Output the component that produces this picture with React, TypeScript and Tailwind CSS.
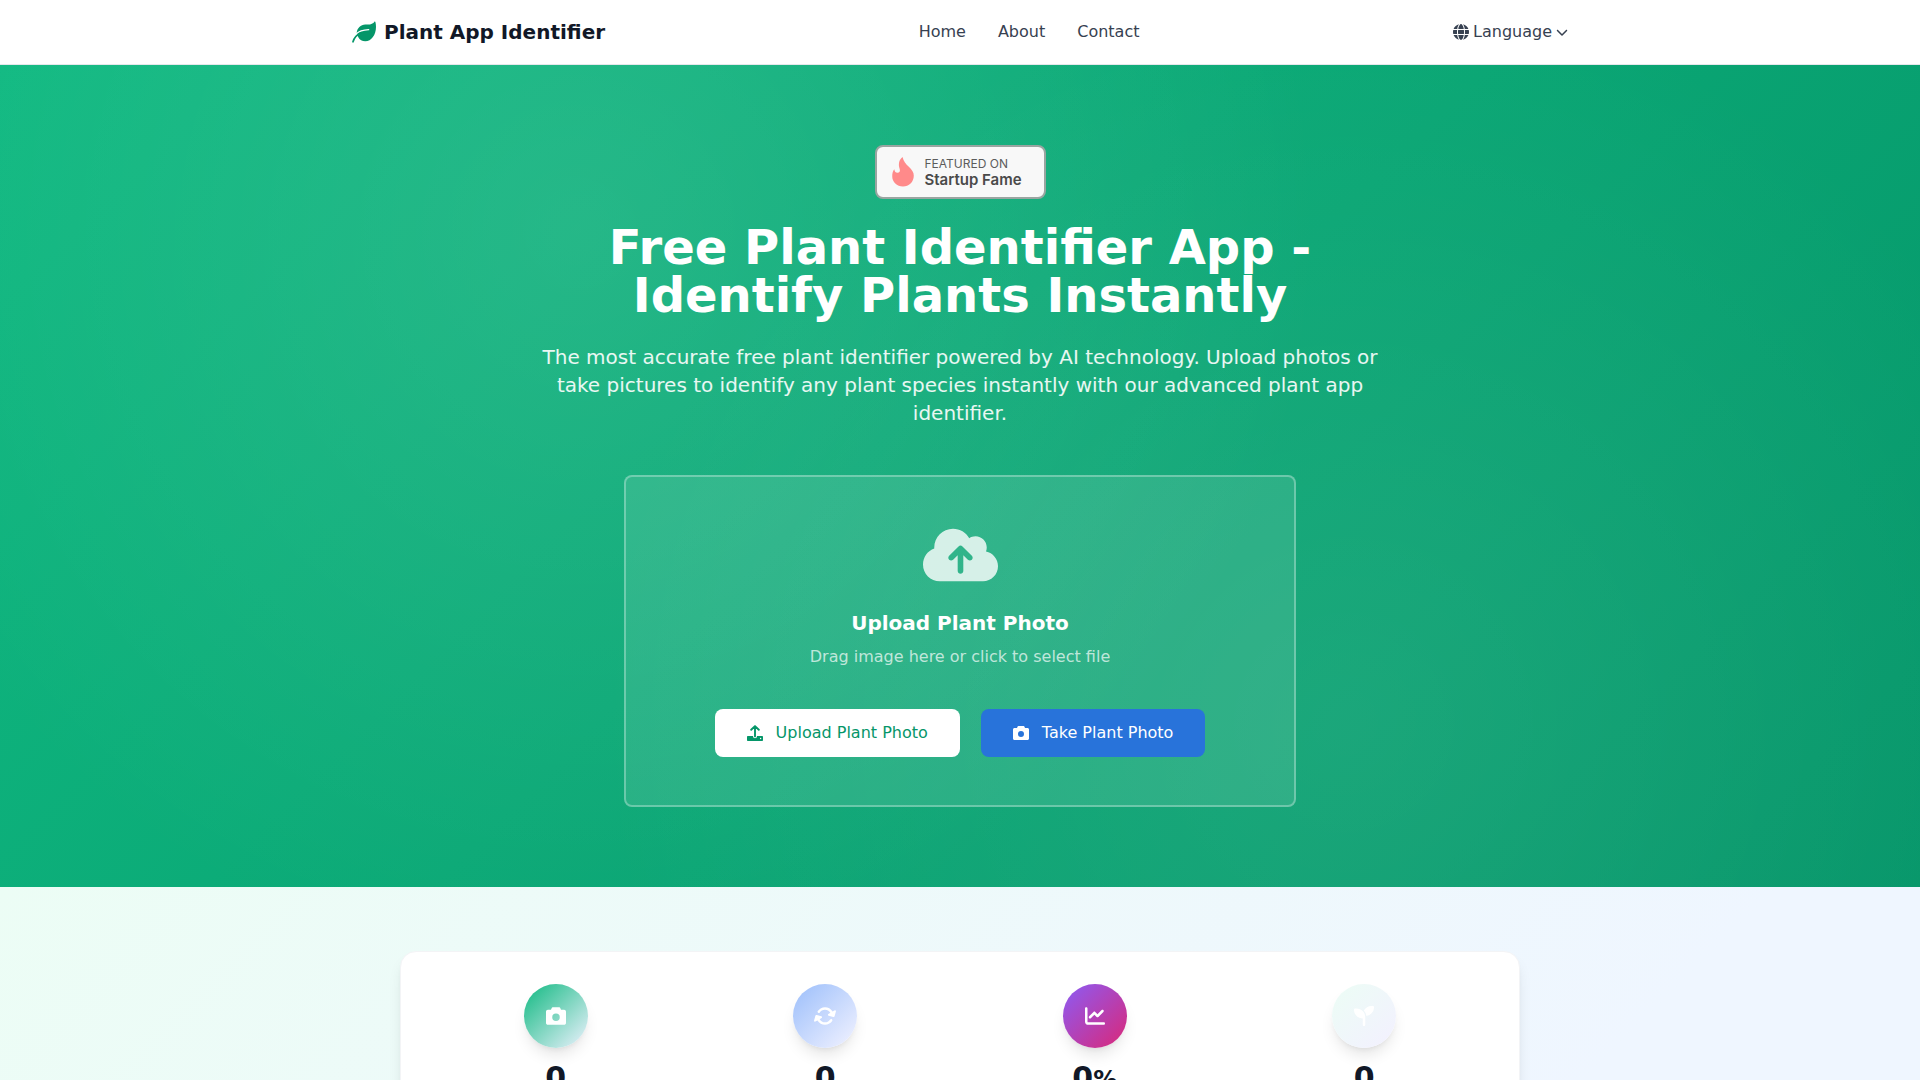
import React, { useRef, useState } from "react";
import {
  FaChartLine,
  FaChevronDown,
  FaCloudArrowUp,
  FaGlobe,
  FaRotate,
  FaSeedling,
} from "react-icons/fa6";

interface IconProps {
  className?: string;
}

const LeafIcon: React.FC<IconProps> = ({ className }) => (
  <svg viewBox="0 0 24 24" className={className} fill="none" aria-hidden="true">
    <path
      fill="currentColor"
      d="M22.6 1.5C23 1.300 23.300 1.500 23.400 1.900C23.800 3.400 24 5 24 6.700C24 14.800 19.400 21.300 13.300 21.300C10.200 21.300 7.600 19.700 6.300 17.200L4.700 13C5.100 8.300 8.700 4.600 13.300 4.600H16C18.900 4.600 21.200 3.700 22.600 1.500Z"
    />
    <path
      stroke="white"
      strokeWidth="1.3"
      strokeLinecap="round"
      d="M4 14.300C7 11.200 11 9.900 16.700 9.700"
    />
    <path
      stroke="currentColor"
      strokeWidth="1.7"
      strokeLinecap="round"
      d="M1 21.800C2 18.200 4.500 15 9 12.800"
    />
  </svg>
);

const CameraIcon: React.FC<IconProps> = ({ className }) => (
  <svg
    viewBox="0 0 16 16"
    className={className}
    fill="currentColor"
    aria-hidden="true"
  >
    <path
      fillRule="evenodd"
      d="M5.400 1H10.600C11 1 11.400 1.300 11.500 1.700L12 3H14.500C15.300 3 16 3.700 16 4.500V13.500C16 14.300 15.300 15 14.500 15H1.500C0.700 15 0 14.300 0 13.500V4.500C0 3.700 0.700 3 1.500 3H4L4.500 1.700C4.600 1.300 5 1 5.400 1ZM8 6A3 3 0 1 0 8 12A3 3 0 1 0 8 6Z"
    />
  </svg>
);

const UploadIcon: React.FC<IconProps> = ({ className }) => (
  <svg
    viewBox="0 0 16 16"
    className={className}
    fill="currentColor"
    aria-hidden="true"
  >
    <path
      fillRule="evenodd"
      d="M1 11H6V11.300A2 2 0 0 0 10 11.300V11H15C15.600 11 16 11.400 16 12V15C16 15.600 15.600 16 15 16H1C0.400 16 0 15.600 0 15V12C0 11.400 0.400 11 1 11ZM13.600 12.800A0.700 0.700 0 1 0 13.600 14.200A0.700 0.700 0 1 0 13.600 12.800Z"
    />
    <path
      fill="none"
      stroke="currentColor"
      strokeWidth="1.900"
      strokeLinecap="round"
      strokeLinejoin="round"
      d="M8 11.400V1.300M4.200 4.800L8 1.100L11.800 4.800"
    />
  </svg>
);

const navLinks = [
  { label: "Home", href: "#home" },
  { label: "About", href: "#about" },
  { label: "Contact", href: "#contact" },
];

const stats = [
  {
    id: "photos",
    value: "0",
    suffix: "",
    icon: <CameraIcon className="h-5 w-5" />,
    circle: "bg-[linear-gradient(135deg,#10b981,#eef2ff)]",
  },
  {
    id: "updates",
    value: "0",
    suffix: "",
    icon: <FaRotate className="rotate-[15deg]" />,
    circle: "bg-[linear-gradient(135deg,#9bbefb,#f3f3ff)]",
  },
  {
    id: "accuracy",
    value: "0",
    suffix: "%",
    icon: <FaChartLine />,
    circle: "bg-[linear-gradient(135deg,#8b5cf6,#db2777)]",
  },
  {
    id: "species",
    value: "0",
    suffix: "",
    icon: <FaSeedling />,
    circle: "bg-[linear-gradient(135deg,#ecfdf5,#f3f0ff)]",
  },
];

const Header: React.FC = () => {
  const [open, setOpen] = useState(false);

  return (
    <header className="border-b border-gray-200 bg-white">
      <div className="mx-auto flex h-16 max-w-7xl items-center justify-between px-8">
        <a href="#home" className="flex items-center gap-2">
          <LeafIcon className="h-6 w-6 text-[#059669]" />
          <span className="text-xl font-bold text-[#111827]">
            Plant App Identifier
          </span>
        </a>

        <nav className="flex items-center gap-8">
          {navLinks.map((link) => (
            <a
              key={link.label}
              href={link.href}
              className="text-[#374151] hover:text-[#059669]"
            >
              {link.label}
            </a>
          ))}
        </nav>

        <button
          type="button"
          aria-expanded={open}
          onClick={() => setOpen(!open)}
          className="flex cursor-pointer items-center gap-1 text-[#374151]"
        >
          <FaGlobe />
          <span>Language</span>
          <FaChevronDown className="text-xs" />
        </button>
      </div>
    </header>
  );
};

const FameBadge: React.FC = () => (
  <a
    href="#startup-fame"
    className="flex h-[54px] w-[171px] items-center gap-2.5 rounded-lg border-2 border-[#9aa5a1] bg-[#f8f8f8] pl-3.5"
  >
    <svg viewBox="0 0 24 32" className="h-[30px] w-6 shrink-0" fill="#ff8a8a">
      <path d="M11.5 0C12.6 5 15 7.200 18.200 10.500C21.700 13.900 23.500 16.500 23.500 20C23.500 26.700 18.300 31.500 12 31.500C5.500 31.500 0.500 26.800 0.500 20.500C0.500 17.500 1 15 2.700 13C3.100 15.500 4.200 16.800 6 16.800C8.300 16.800 9.300 15 8.400 12.500C6.900 8 7.500 3 11.500 0Z" />
    </svg>
    <span className="flex flex-col font-['Inter',sans-serif] whitespace-nowrap">
      <span className="text-xs leading-4 text-[#5c5c5c]">FEATURED ON</span>
      <span className="text-[15px] leading-4 font-semibold text-[#4a4a4a]">
        Startup Fame
      </span>
    </span>
  </a>
);

const UploadBox: React.FC = () => {
  const fileInput = useRef<HTMLInputElement>(null);
  const [fileName, setFileName] = useState("");

  const handleDrop = (e: React.DragEvent) => {
    e.preventDefault();
    setFileName(e.dataTransfer.files[0]?.name ?? "");
  };

  return (
    <div
      onDragOver={(e) => e.preventDefault()}
      onDrop={handleDrop}
      className="mx-auto mt-12 w-full max-w-2xl rounded-lg border-2 border-white/30 bg-white/10 p-12 text-center"
    >
      <FaCloudArrowUp className="mx-auto mb-6 h-[60px] w-[75px] text-white/80" />
      <h2 className="mb-2 text-xl font-semibold text-white">
        Upload Plant Photo
      </h2>
      <p className="mb-10 text-white/70">
        {fileName || "Drag image here or click to select file"}
      </p>
      <input
        ref={fileInput}
        type="file"
        accept="image/*"
        aria-label="Upload Plant Photo"
        className="hidden"
        onChange={(e) => setFileName(e.target.files?.[0]?.name ?? "")}
      />
      <div className="flex justify-center gap-[21px]">
        <button
          type="button"
          onClick={() => fileInput.current?.click()}
          className="flex h-12 cursor-pointer items-center gap-[13px] rounded-lg bg-white px-8 text-[#059669]"
        >
          <UploadIcon className="h-4 w-4" />
          Upload Plant Photo
        </button>
        <button
          type="button"
          onClick={() => fileInput.current?.click()}
          className="flex h-12 cursor-pointer items-center gap-[13px] rounded-lg bg-[#2873da] px-8 text-white"
        >
          <CameraIcon className="h-4 w-4" />
          Take Plant Photo
        </button>
      </div>
    </div>
  );
};

const Hero: React.FC = () => (
  <section
    id="home"
    className="bg-[radial-gradient(circle_at_30%_20%,rgba(255,255,255,0.1)_0%,transparent_50%),radial-gradient(circle_at_70%_80%,rgba(255,255,255,0.08)_0%,transparent_50%),linear-gradient(135deg,#10b981_0%,#059669_100%)] px-8 py-20"
  >
    <div className="mx-auto flex max-w-4xl flex-col">
      <div className="mb-6 flex justify-center">
        <FameBadge />
      </div>
      <h1 className="mx-auto mb-6 max-w-3xl text-center text-5xl leading-none font-bold text-white">
        Free Plant Identifier App - Identify Plants Instantly
      </h1>
      <p className="px-6 text-center text-xl text-white/90">
        The most accurate free plant identifier powered by AI technology. Upload
        photos or take pictures to identify any plant species instantly with our
        advanced plant app identifier.
      </p>
      <UploadBox />
    </div>
  </section>
);

const Stats: React.FC = () => (
  <section className="bg-[linear-gradient(135deg,#ecfdf5_0%,#eff6ff_80%)] px-8 py-16">
    <div className="mx-auto grid max-w-[1120px] grid-cols-4 gap-6 rounded-2xl border border-gray-100 bg-white p-8 shadow-lg">
      {stats.map((stat) => (
        <div key={stat.id} className="flex flex-col items-center">
          <div
            className={`mb-3 flex h-16 w-16 items-center justify-center rounded-full text-xl text-white shadow-lg ${stat.circle}`}
          >
            {stat.icon}
          </div>
          <div className="text-3xl font-bold text-[#111827]">
            {stat.value}
            {stat.suffix && <span className="text-2xl">{stat.suffix}</span>}
          </div>
        </div>
      ))}
    </div>
  </section>
);

const App: React.FC = () => {
  return (
    <div className="min-h-screen bg-white font-['DejaVu_Sans',sans-serif]">
      <Header />
      <main>
        <Hero />
        <Stats />
      </main>
    </div>
  );
};

export default App;
